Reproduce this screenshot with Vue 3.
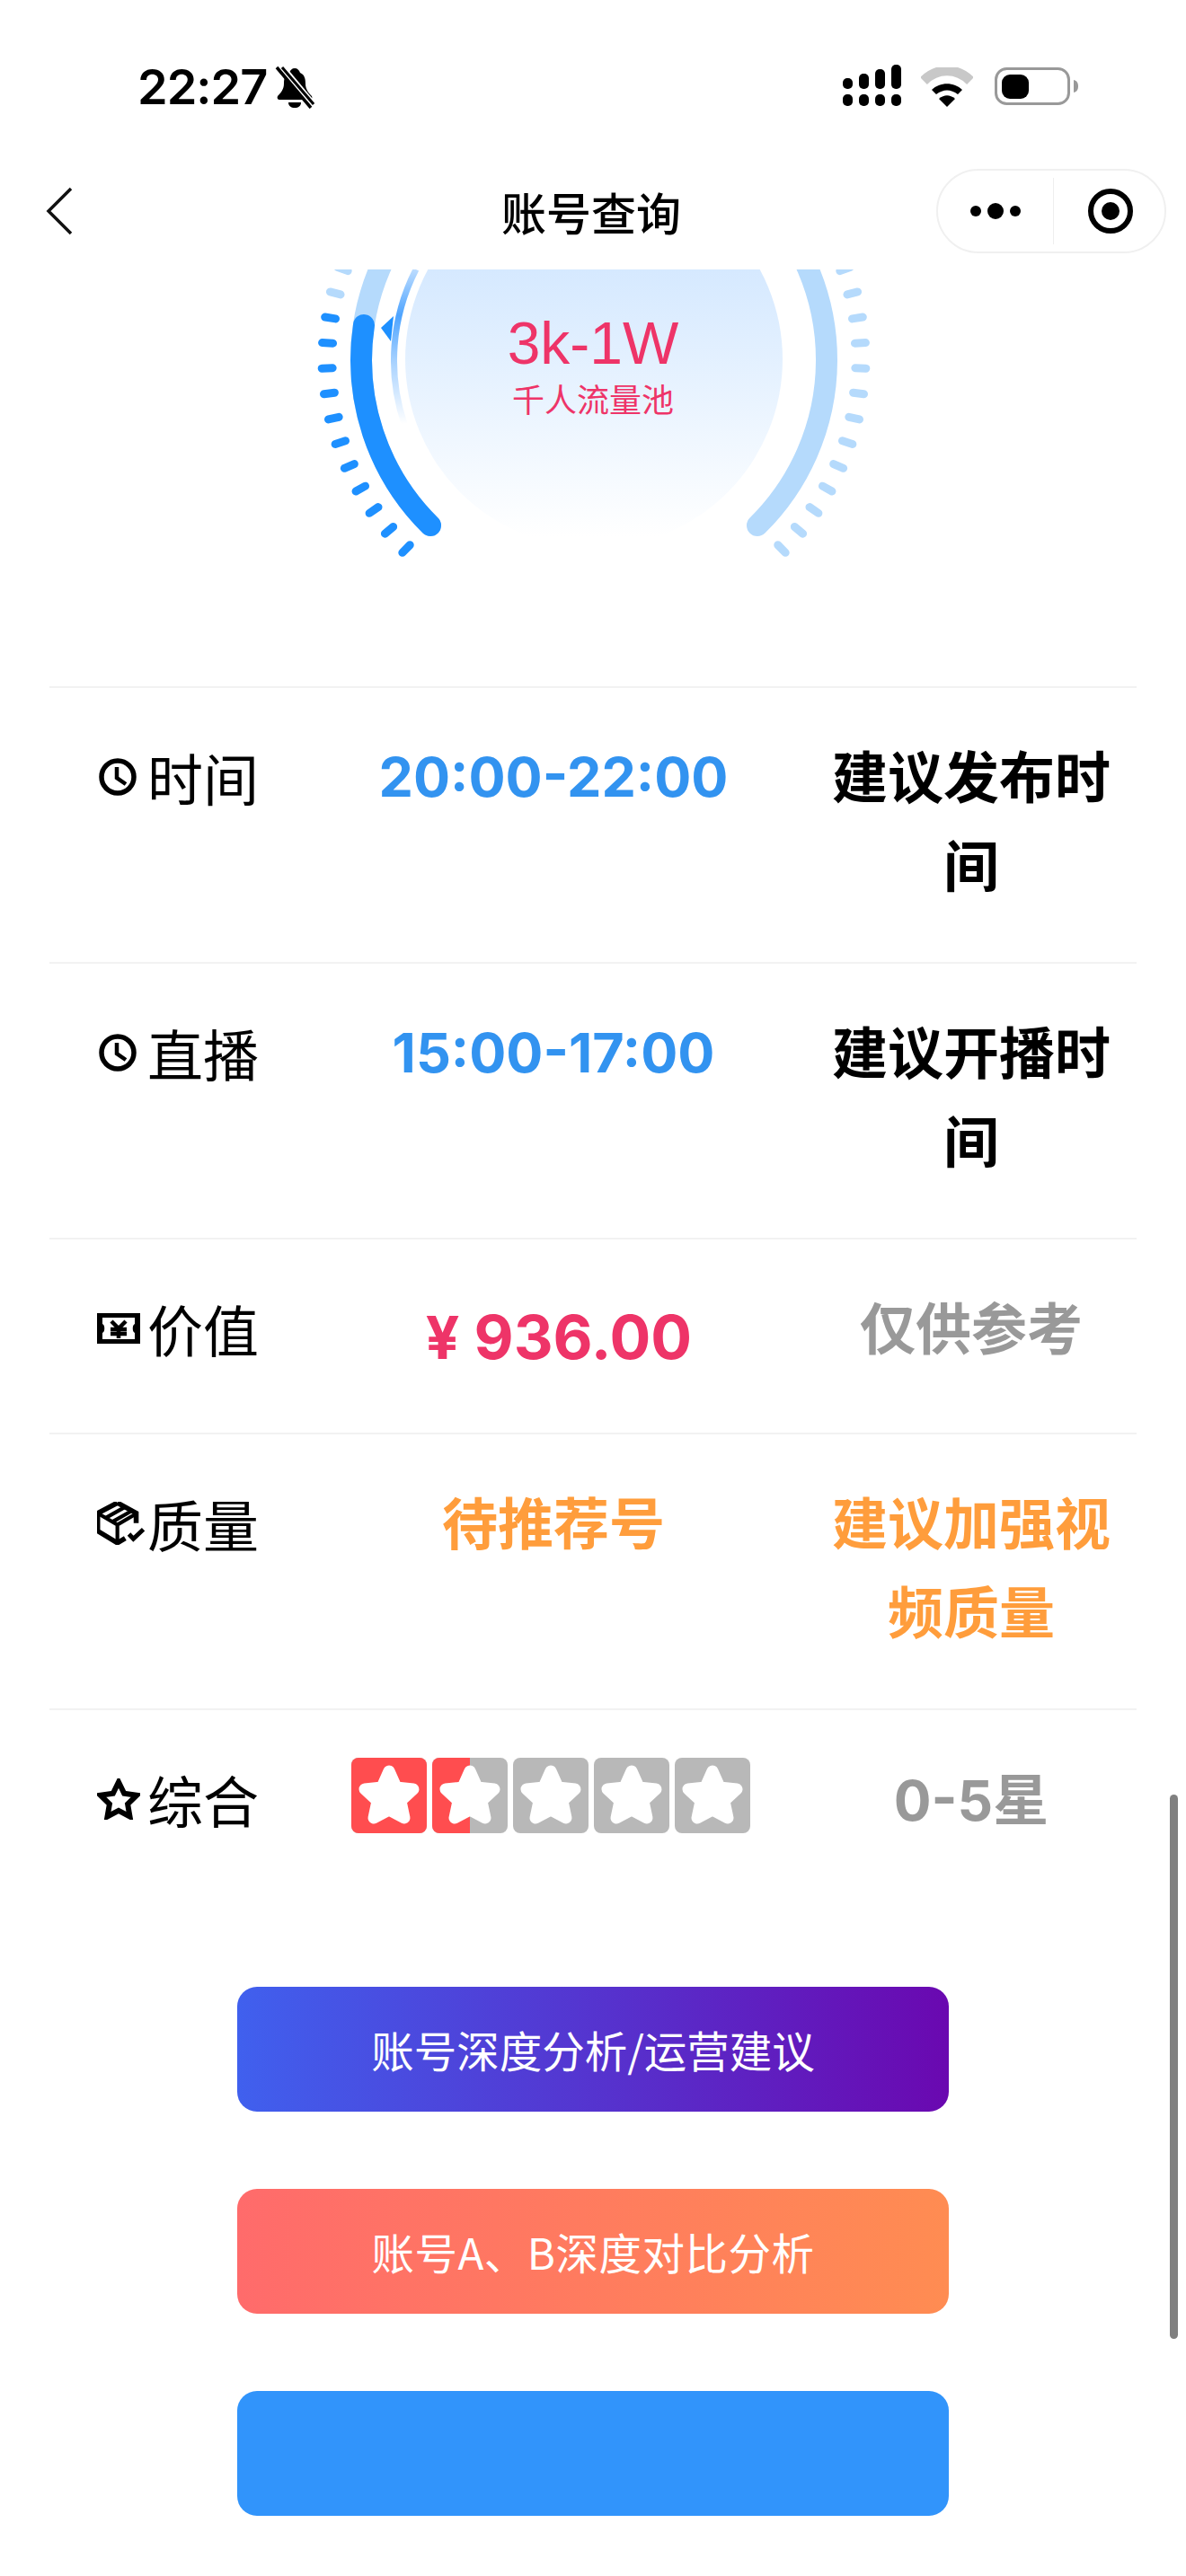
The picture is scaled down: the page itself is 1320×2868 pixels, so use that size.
<script setup>
import { computed } from 'vue'

// 刻度：圆周上取点，左边亮到 k=-1，其余浅色
const ticks = computed(() => {
  const cx = 661, cy = 400, r = 297
  const list = []
  for (const side of [-1, 1]) {
    for (let k = -3; k <= 9; k++) {
      const t = ((-3.5 + 5.42 * k) * Math.PI) / 180
      const nx = Math.cos(t) * side
      const ny = Math.sin(t)
      list.push({
        id: `${side}-${k}`,
        x1: cx + nx * (r - 6),
        y1: cy + ny * (r - 6),
        x2: cx + nx * (r + 6),
        y2: cy + ny * (r + 6),
        on: side === -1 && k >= -1,
      })
    }
  }
  return list
})

const rows = [
  { icon: 'clock', label: '时间', value: '20:00-22:00', valueClass: 'blue', note: '建议发布时间', noteClass: 'black' },
  { icon: 'clock', label: '直播', value: '15:00-17:00', valueClass: 'blue', note: '建议开播时间', noteClass: 'black' },
  { icon: 'ticket', label: '价值', price: '936.00', note: '仅供参考', noteClass: 'gray' },
  { icon: 'box', label: '质量', value: '待推荐号', valueClass: 'orange', note: '建议加强视频质量', noteClass: 'orange' },
  { icon: 'star', label: '综合', stars: true, note: '0-5星', noteClass: 'gray' },
]

const stars = [100, 50, 0, 0, 0]
const starPts = '42,15 50,33 69,35 55,48 59,67 42,58 25,67 29,48 15,35 34,33'
</script>

<template>
  <div class="page">
    <div class="status">
      <div class="status-left">
        <span class="time">22:27</span>
        <svg class="bell" width="44" height="48" viewBox="0 0 44 48">
          <path d="M22 3c3 0 5 2 6 5 5 2 6 7 6 12 0 6 3 10 7 14 1 2 0 4-2 4H5c-2 0-3-2-2-4 4-4 7-8 7-14 0-5 1-10 6-12 1-3 3-5 6-5z" fill="#000" />
          <path d="M15 41h14c0 4-3 6-7 6s-7-2-7-6z" fill="#000" />
          <path d="M6 1l36 43" stroke="#fff" stroke-width="9" />
          <path d="M2 2l38 45" stroke="#000" stroke-width="3.5" />
          <path d="M8 2l35 41" stroke="#000" stroke-width="3" />
        </svg>
      </div>
      <div class="status-right">
        <svg width="66" height="48" viewBox="0 0 66 48">
          <rect x="0" y="15" width="11" height="12" rx="5" />
          <rect x="18" y="10" width="11" height="17" rx="5" />
          <rect x="36" y="5" width="11" height="22" rx="5" />
          <rect x="54" y="0" width="11" height="27" rx="5" />
          <rect x="0" y="33" width="11" height="13" rx="5" />
          <rect x="18" y="33" width="11" height="13" rx="5" />
          <rect x="36" y="33" width="11" height="13" rx="5" />
          <rect x="54" y="33" width="11" height="13" rx="5" />
        </svg>
        <svg class="wifi" width="58" height="44" viewBox="0 0 58 44">
          <path d="M3 15C18 0 40 0 55 15" fill="none" stroke="#c8c8c8" stroke-width="11" />
          <path d="M12 25C21 16 37 16 46 25l-5 5C33 24 25 24 17 30z" fill="#000" />
          <path d="M20 35c6-5 12-5 18 0l-9 9z" fill="#000" />
        </svg>
        <svg class="battery" width="94" height="44" viewBox="0 0 94 44">
          <rect x="1.5" y="1.5" width="81" height="39" rx="12" fill="none" stroke="#999" stroke-width="3" />
          <rect x="8" y="8" width="30" height="27" rx="9" fill="#000" />
          <path d="M88 14c4 1 5 4 5 7s-1 6-5 7z" fill="#999" />
        </svg>
      </div>
    </div>

    <div class="nav">
      <svg class="back" width="32" height="54" viewBox="0 0 32 54">
        <path d="M29 2L4 27l25 25" fill="none" stroke="#111" stroke-width="3.5" />
      </svg>
      <div class="title">账号查询</div>
      <div class="capsule">
        <svg class="capsule-dots" width="56" height="24" viewBox="0 0 56 24">
          <circle cx="6" cy="12" r="6" />
          <circle cx="28" cy="12" r="9" />
          <circle cx="50" cy="12" r="6" />
        </svg>
        <span class="capsule-line"></span>
        <svg class="capsule-target" width="54" height="54" viewBox="0 0 54 54">
          <circle cx="27" cy="27" r="22" fill="none" stroke="#000" stroke-width="6" />
          <circle cx="27" cy="27" r="10" fill="#000" />
        </svg>
      </div>
    </div>

    <div class="gauge">
      <svg class="gauge-svg" width="1320" height="464" viewBox="0 300 1320 464">
        <defs>
          <linearGradient id="faceFill" x1="0" y1="0" x2="0" y2="1">
            <stop offset="0.2" stop-color="#d2e7ff" />
            <stop offset="0.62" stop-color="#eaf4ff" />
            <stop offset="0.97" stop-color="#ffffff" />
          </linearGradient>
          <linearGradient id="thinFill" gradientUnits="userSpaceOnUse" x1="0" y1="300" x2="0" y2="472">
            <stop offset="0" stop-color="#bcdcff" />
            <stop offset="0.3" stop-color="#4ea4ff" />
            <stop offset="0.6" stop-color="#a8d2ff" />
            <stop offset="1" stop-color="#ffffff" />
          </linearGradient>
        </defs>
        <circle cx="661" cy="400" r="210" fill="url(#faceFill)" />
        <path d="M463 300A222 222 0 0 0 450 472" fill="none" stroke="url(#thinFill)" stroke-width="7" />
        <path d="M438 352L424 365L435 380z" fill="#1e90ff" />
        <path d="M479 585A259 259 0 1 1 843 585" fill="none" stroke="#b5dafc" stroke-width="24" stroke-linecap="round" />
        <path d="M405 362A259 259 0 0 0 479 585" fill="none" stroke="#1e90ff" stroke-width="24" stroke-linecap="round" />
        <line
          v-for="t in ticks"
          :key="t.id"
          :x1="t.x1"
          :y1="t.y1"
          :x2="t.x2"
          :y2="t.y2"
          :stroke="t.on ? '#1e90ff' : '#b5dafc'"
          stroke-width="9"
          stroke-linecap="round"
        />
      </svg>
      <div class="gauge-text">
        <span class="gauge-num">3k-1W</span>
        <span class="gauge-sub">千人流量池</span>
      </div>
    </div>

    <div class="rows">
      <div v-for="row in rows" :key="row.label" class="row">
        <div class="label">
          <span class="icon">
            <svg v-if="row.icon === 'clock'" width="46" height="46" viewBox="0 0 46 46">
              <circle cx="23" cy="23" r="18" fill="none" stroke="#000" stroke-width="5.500" />
              <path d="M22 12v12l10 7" fill="none" stroke="#000" stroke-width="4.500" />
            </svg>
            <svg v-else-if="row.icon === 'ticket'" width="48" height="34" viewBox="0 0 48 34">
              <path d="M0 0h48v34H0zM6 5v7c3 1 3 9 0 10v7h36v-7c-3-1-3-9 0-10V5z" fill="#000" fill-rule="evenodd" />
              <path d="M16 9l8 8 8-8M24 16v12M15 18h18M15 23h18" fill="none" stroke="#000" stroke-width="4.500" />
            </svg>
            <svg v-else-if="row.icon === 'box'" class="box-icon" width="54" height="48" viewBox="90 170 155 135">
              <path d="M155 172l60 33v32M180 285l-25 15-63-38v-57l63-33" fill="none" stroke="#000" stroke-width="16" />
              <path d="M97 208l58 34 58-34M155 242v52M118 220l60-34M140 232l60-34" fill="none" stroke="#000" stroke-width="12" />
              <path d="M192 272l14 15 32-30" fill="none" stroke="#000" stroke-width="14" />
            </svg>
            <svg v-else width="48" height="46" viewBox="0 0 48 46">
              <path d="M24 4l6.200 12.700 14 2-10.100 9.900 2.400 13.900L24 35.900l-12.500 6.600 2.400-13.900L3.800 18.700l14-2z" fill="none" stroke="#000" stroke-width="6" />
            </svg>
          </span>
          <span>{{ row.label }}</span>
        </div>

        <div class="value">
          <div v-if="row.stars" class="stars">
            <span v-for="(fill, i) in stars" :key="i" class="star-box">
              <span class="star-fill" :style="{ width: fill + '%' }"></span>
              <svg class="star-svg" width="84" height="84" viewBox="0 0 84 84">
                <polygon :points="starPts" fill="#fff" stroke="#fff" stroke-width="13" stroke-linejoin="round" />
              </svg>
            </span>
          </div>
          <span v-else-if="row.price" class="price"><span class="yen">¥</span> {{ row.price }}</span>
          <span v-else :class="row.valueClass">{{ row.value }}</span>
        </div>

        <div class="note" :class="row.noteClass">{{ row.note }}</div>
      </div>
    </div>

    <div class="buttons">
      <div class="btn btn-purple">账号深度分析/运营建议</div>
      <div class="btn btn-coral">账号A、B深度对比分析</div>
      <div class="btn btn-blue"></div>
    </div>

    <div class="scrollbar"></div>
  </div>
</template>

<style>
html,
body {
  background: #fff;
}
</style>

<style scoped>
.page {
  position: relative;
  width: 1320px;
  height: 2868px;
  overflow: hidden;
  background: #fff;
  color: #000;
  font-family: "Liberation Sans", "Noto Sans CJK SC", sans-serif;
}

.status {
  height: 178px;
  box-sizing: border-box;
  padding: 72px 119px 0 153px;
  display: flex;
  justify-content: space-between;
  align-items: flex-start;
}
.status-left {
  display: flex;
  align-items: center;
  gap: 9px;
}
.time {
  font-family: Inter, sans-serif;
  font-size: 54px;
  line-height: 50px;
  font-weight: 600;
  letter-spacing: -1px;
}
.status-right {
  display: flex;
  align-items: flex-start;
}
.wifi {
  margin: 3px 0 0 21px;
}
.battery {
  margin: 3px 0 0 24px;
}

.nav {
  height: 122px;
  display: grid;
  grid-template-columns: 1fr auto 1fr;
  align-items: center;
  padding: 0 22px 8px 0;
  box-sizing: border-box;
}
.back {
  margin-left: 50px;
}
.title {
  font-family: "Noto Sans CJK SC", sans-serif;
  font-size: 50px;
  font-weight: 500;
  margin-left: 18px;
}
.capsule {
  justify-self: end;
  width: 256px;
  height: 94px;
  box-sizing: border-box;
  border: 2px solid #f0f0f0;
  border-radius: 47px;
  display: flex;
  align-items: center;
  padding-left: 36px;
}
.capsule-dots {
  flex: none;
}
.capsule-line {
  flex: none;
  width: 1px;
  height: 74px;
  margin-left: 36px;
  background: #eee;
}
.capsule-target {
  flex: none;
  margin-left: 36px;
}

.gauge {
  position: relative;
  height: 464px;
}
.gauge-svg {
  display: block;
}
.gauge-text {
  position: absolute;
  top: 49px;
  left: 0;
  right: 0;
  display: flex;
  flex-direction: column;
  align-items: center;
  color: #ee3468;
}
.gauge-num {
  font-size: 66px;
  line-height: 66px;
}
.gauge-sub {
  font-family: "Noto Sans CJK SC", sans-serif;
  font-size: 36px;
  line-height: 40px;
  margin-top: 8px;
}

.rows {
  margin: 0 55px;
}
.row {
  display: grid;
  grid-template-columns: 275px 572px 358px;
  padding: 47px 0 56px;
  min-height: 112px;
  border-top: 2px solid #f2f2f2;
  line-height: 98.5px;
  font-family: "Noto Sans CJK SC", sans-serif;
  font-size: 62px;
}
.label {
  display: flex;
  align-items: flex-start;
  padding: 3px 0 0 53px;
}
.icon {
  flex: none;
  width: 50px;
  height: 98px;
  margin-right: 6px;
  display: flex;
  align-items: center;
}
.icon svg {
  flex: none;
}
.value {
  padding-top: 2px;
  text-align: center;
  font-weight: 700;
}
.value .orange {
  display: block;
  margin-top: -2px;
}
.note {
  padding-top: 5px;
  text-align: center;
  font-weight: 700;
  font-family: Inter, "Noto Sans CJK SC", sans-serif;
}
.blue {
  display: block;
  margin-top: 1px;
  font-family: Inter, "Noto Sans CJK SC", sans-serif;
  color: #3293f0;
  font-size: 61px;
}
.orange {
  color: #ff9d3c;
}
.black {
  color: #000;
}
.gray {
  color: #999;
}
.price {
  display: block;
  margin-top: 15px;
  padding-left: 12px;
  line-height: 88px;
  font-family: Inter, "Noto Sans CJK SC", sans-serif;
  font-size: 68px;
  color: #ee3468;
}
.yen {
  font-size: 66px;
}
.stars {
  display: flex;
  justify-content: center;
  gap: 6px;
  margin: 4px 0 0 -6px;
}
.star-box {
  position: relative;
  width: 84px;
  height: 84px;
  border-radius: 8px;
  overflow: hidden;
  background: #b8b8b8;
}
.star-fill {
  position: absolute;
  left: 0;
  top: 0;
  bottom: 0;
  background: #ff4d4f;
}
.star-svg {
  position: absolute;
  left: 0;
  top: 0;
}

.buttons {
  margin-top: 93px;
  display: flex;
  flex-direction: column;
  align-items: center;
  gap: 86px;
}
.btn {
  width: 792px;
  height: 139px;
  border-radius: 22px;
  display: flex;
  align-items: center;
  justify-content: center;
  color: #fff;
  font-family: "Noto Sans CJK SC", sans-serif;
  font-size: 47.5px;
}
.btn-purple {
  background: linear-gradient(90deg, #4060ee, #6a08b0);
}
.btn-coral {
  background: linear-gradient(90deg, #ff6b6b, #ff8c52);
  letter-spacing: 0.5px;
}
.btn-blue {
  background: #3194fb;
}

.scrollbar {
  position: absolute;
  right: 9px;
  top: 1998px;
  width: 9px;
  height: 606px;
  border-radius: 5px;
  background: #808080;
}
</style>
